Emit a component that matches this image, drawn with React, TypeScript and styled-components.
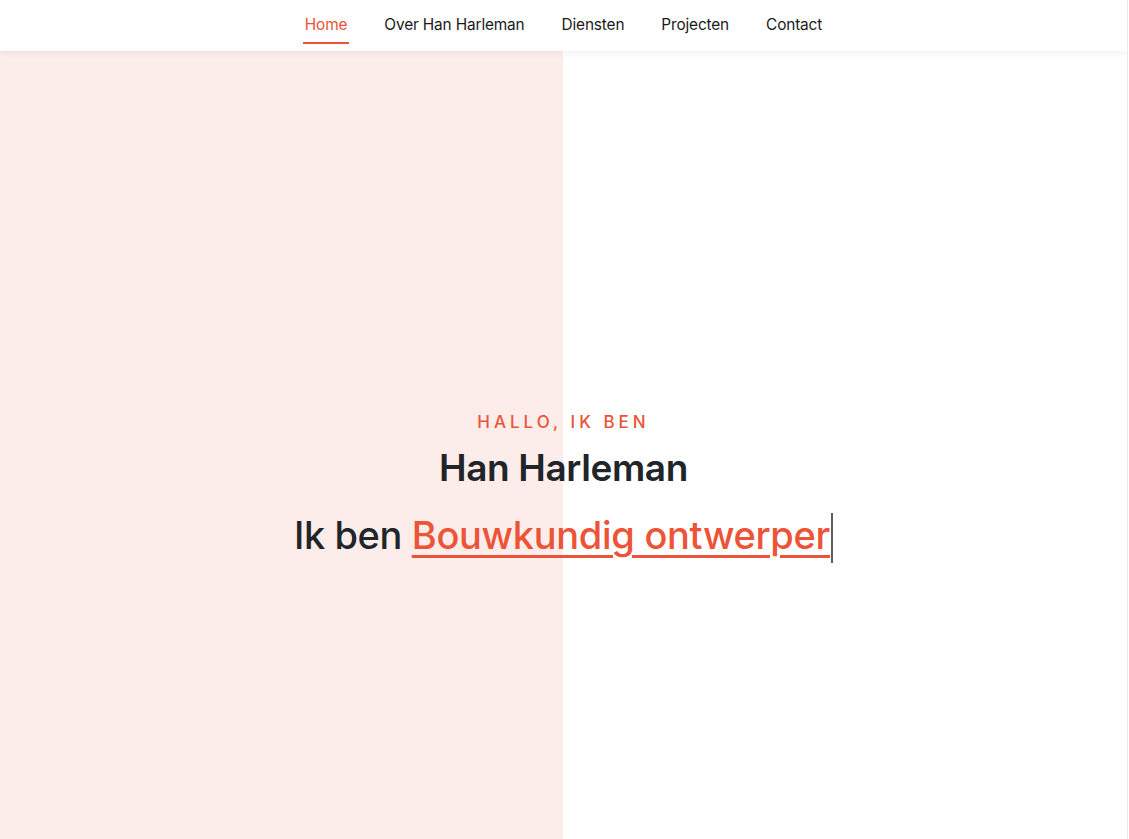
import React from "react";
import styled, { createGlobalStyle } from "styled-components";

const Global = createGlobalStyle`
  html, body { margin: 0; padding: 0; background: #fff; }
  body { font-family: "Inter", "Noto Sans", sans-serif; color: #212529; }
  * { box-sizing: border-box; }
`;

const Page = styled.div`
  width: 1128px;
  height: 839px;
  border-right: 1px solid #ebebeb;
  display: flex;
  flex-direction: column;
  background: linear-gradient(to right, #fcedea 563px, #ffffff 563px);
  overflow: hidden;
`;

const Header = styled.header`
  height: 51px;
  flex: none;
  background: #fff;
  box-shadow: 0 2px 8px rgba(0, 0, 0, 0.06);
  display: flex;
  justify-content: center;
  position: relative;
  z-index: 1;
`;

const Nav = styled.nav`
  display: flex;
  gap: 33px;
`;

const NavLink = styled.a<{ $active?: boolean }>`
  display: flex;
  align-items: center;
  height: 44px;
  padding: 6px 2px 0;
  font-size: 15.4px;
  letter-spacing: -0.15px;
  text-decoration: none;
  color: ${(p) => (p.$active ? "#ed5337" : "#1a1a1a")};
  border-bottom: 2px solid ${(p) => (p.$active ? "#ed5337" : "transparent")};
  cursor: pointer;
`;

const Hero = styled.section`
  flex: 1;
  display: flex;
  flex-direction: column;
  align-items: center;
  padding-top: 359px;
`;

const Kicker = styled.div`
  color: #ed5337;
  font-size: 17px;
  font-weight: 500;
  letter-spacing: 4px;
  line-height: 24px;
  margin-left: 0px;
`;

const Name = styled.h1`
  margin: 12px 0 0;
  font-size: 37px;
  font-weight: 600;
  line-height: 44px;
  letter-spacing: -0.4px;
  color: #212529;
`;

const Role = styled.h2`
  margin: 20px 0 0;
  font-size: 38px;
  font-weight: 500;
  line-height: 50px;
  letter-spacing: -0.4px;
  color: #212529;
  white-space: nowrap;
`;

const Typed = styled.span`
  color: #ed5337;
  text-decoration: underline;
  text-decoration-thickness: 3px;
  text-underline-offset: 6px;
  letter-spacing: -0.3px;
`;

const Cursor = styled.span`
  display: inline-block;
  width: 2px;
  height: 50px;
  background: #5f5f5f;
  margin-left: 1px;
  vertical-align: -14px;
`;

export default function App() {
  const links = ["Home", "Over Han Harleman", "Diensten", "Projecten", "Contact"];
  return (
    <>
      <Global />
      <Page>
        <Header>
          <Nav>
            {links.map((l, i) => (
              <NavLink key={l} $active={i === 0}>
                {l}
              </NavLink>
            ))}
          </Nav>
        </Header>
        <Hero>
          <Kicker>HALLO, IK BEN</Kicker>
          <Name>Han Harleman</Name>
          <Role>
            Ik ben <Typed>Bouwkundig ontwerper</Typed>
            <Cursor />
          </Role>
        </Hero>
      </Page>
    </>
  );
}
